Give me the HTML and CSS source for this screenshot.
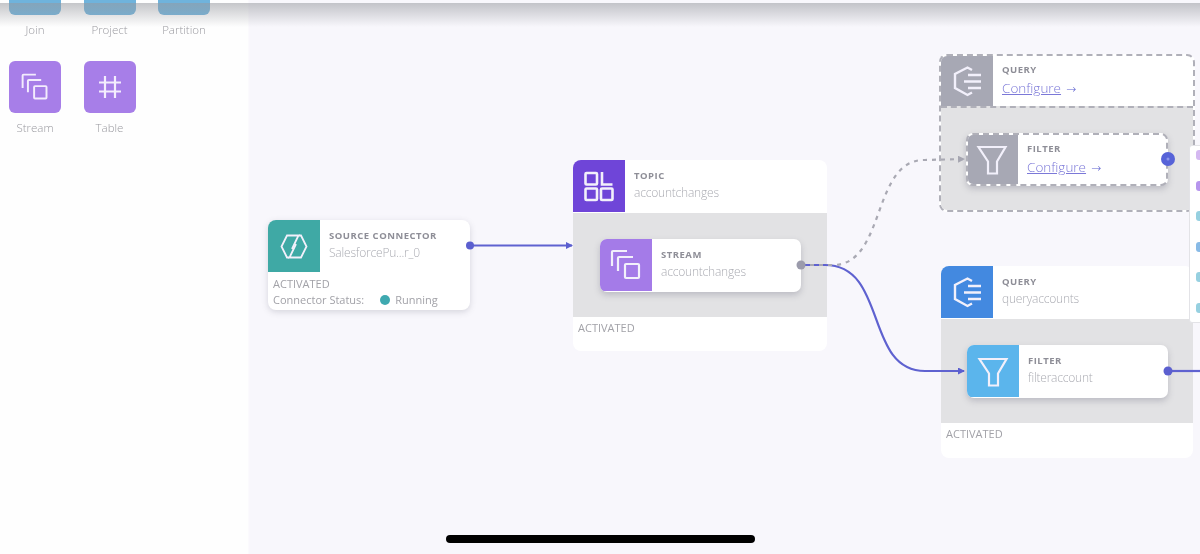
FILE: index.html
```html
<!DOCTYPE html>
<html lang="en">
<head>
  <meta charset="UTF-8">
  <title>Pipeline</title>
  <link rel="stylesheet" href="styles.css">
</head>
<body>
  <svg class="defs" width="0" height="0">
    <defs>
      <symbol id="i-stream" viewBox="0 0 52 52">
        <path d="M12 27V13a1 1 0 0 1 1-1h14M18 32V19a1 1 0 0 1 1-1h14" fill="none" stroke="currentColor" stroke-width="2.200"/>
        <rect x="25" y="25" width="14" height="14" rx="1" fill="none" stroke="currentColor" stroke-width="2.200"/>
      </symbol>
      <symbol id="i-table" viewBox="0 0 52 52">
        <path d="M21 15v22M31 15v22M15 21.500h22M15 30.500h22" fill="none" stroke="currentColor" stroke-width="2.200"/>
      </symbol>
      <symbol id="i-topic" viewBox="0 0 52 52">
        <rect x="12.500" y="13" width="11.500" height="11.500" rx="1" fill="none" stroke="currentColor" stroke-width="2.600"/>
        <path d="M29 12v12.500h10.500" fill="none" stroke="currentColor" stroke-width="2.600"/>
        <rect x="12.500" y="28.500" width="11.500" height="11.500" rx="1" fill="none" stroke="currentColor" stroke-width="2.600"/>
        <rect x="28" y="28.500" width="11.500" height="11.500" rx="1" fill="none" stroke="currentColor" stroke-width="2.600"/>
      </symbol>
      <symbol id="i-query" viewBox="0 0 52 52">
        <path d="M31 15 26.500 12.500 14 19v14l12.500 7 4.500-2.500" fill="none" stroke="currentColor" stroke-width="2.400"/>
        <path d="M27 20h13M23 26.500h17M27 33h13" fill="none" stroke="currentColor" stroke-width="2.400"/>
      </symbol>
      <symbol id="i-filter" viewBox="0 0 52 52">
        <path d="M12.500 14h27L31 28.500V40.500h-9V28.500z" fill="none" stroke="currentColor" stroke-width="2.200"/>
      </symbol>
      <symbol id="i-connector" viewBox="0 0 52 52">
        <path d="M21 37.500H19L13.500 26.500 19 15.500H30.500L24 29" fill="none" stroke="currentColor" stroke-width="1.800"/>
        <path d="M31 15.500H33L38.500 26.500 33 37.500H21.500L28 24" fill="none" stroke="currentColor" stroke-width="1.800"/>
      </symbol>
      <marker id="arrow-blue" markerWidth="8" markerHeight="8" refX="6" refY="3.500" orient="auto" markerUnits="userSpaceOnUse">
        <path d="M0 0 7 3.500 0 7z" fill="#5b5fcf"/>
      </marker>
      <marker id="arrow-grey" markerWidth="8" markerHeight="8" refX="6" refY="3.500" orient="auto" markerUnits="userSpaceOnUse">
        <path d="M0 0 7 3.500 0 7z" fill="#a5a5b0"/>
      </marker>
    </defs>
  </svg>

  <div class="app">
    <aside class="palette">
      <div class="tools">
        <div class="tool"><div class="tile tile-blue"></div><span>Join</span></div>
        <div class="tool"><div class="tile tile-blue"></div><span>Project</span></div>
        <div class="tool"><div class="tile tile-blue"></div><span>Partition</span></div>
        <div class="tool"><div class="tile"><svg class="icon icon-small"><use href="#i-stream"/></svg></div><span>Stream</span></div>
        <div class="tool"><div class="tile"><svg class="icon"><use href="#i-table"/></svg></div><span>Table</span></div>
      </div>
    </aside>

    <main class="canvas">
      <!-- source connector -->
      <section class="node node-source">
        <div class="node-head">
          <div class="node-icon bg-teal"><svg class="icon"><use href="#i-connector"/></svg></div>
          <div class="node-text">
            <div class="node-type">SOURCE CONNECTOR</div>
            <div class="node-name">SalesforcePu...r_0</div>
          </div>
        </div>
        <div class="node-status">
          <div>ACTIVATED</div>
          <div class="status-row"><span>Connector Status:</span><i class="dot"></i><span>Running</span></div>
        </div>
      </section>

      <!-- topic -->
      <section class="node node-topic">
        <div class="node-head">
          <div class="node-icon bg-violet"><svg class="icon"><use href="#i-topic"/></svg></div>
          <div class="node-text">
            <div class="node-type">TOPIC</div>
            <div class="node-name">accountchanges</div>
          </div>
        </div>
        <div class="node-body">
          <div class="card">
            <div class="node-icon bg-purple"><svg class="icon"><use href="#i-stream"/></svg></div>
            <div class="node-text">
              <div class="node-type">STREAM</div>
              <div class="node-name">accountchanges</div>
            </div>
          </div>
        </div>
        <div class="node-foot">ACTIVATED</div>
      </section>

      <!-- query not configured yet -->
      <section class="node node-draft">
        <div class="node-head">
          <div class="node-icon bg-grey"><svg class="icon"><use href="#i-query"/></svg></div>
          <div class="node-text">
            <div class="node-type">QUERY</div>
            <div class="node-name"><a class="configure">Configure</a> <span class="go">→</span></div>
          </div>
        </div>
        <div class="node-body">
          <div class="card card-draft">
            <div class="node-icon bg-grey"><svg class="icon"><use href="#i-filter"/></svg></div>
            <div class="node-text">
              <div class="node-type">FILTER</div>
              <div class="node-name"><a class="configure">Configure</a> <span class="go">→</span></div>
            </div>
          </div>
        </div>
      </section>

      <!-- query -->
      <section class="node node-query">
        <div class="node-head">
          <div class="node-icon bg-blue"><svg class="icon"><use href="#i-query"/></svg></div>
          <div class="node-text">
            <div class="node-type">QUERY</div>
            <div class="node-name">queryaccounts</div>
          </div>
        </div>
        <div class="node-body">
          <div class="card">
            <div class="node-icon bg-sky"><svg class="icon"><use href="#i-filter"/></svg></div>
            <div class="node-text">
              <div class="node-type">FILTER</div>
              <div class="node-name">filteraccount</div>
            </div>
          </div>
        </div>
        <div class="node-foot">ACTIVATED</div>
      </section>

      <svg class="wires" viewBox="248 0 952 554">
        <path d="M470 245.500H572" class="wire" marker-end="url(#arrow-blue)"/>
        <path d="M801 265H825C888 265 864 371 925 371H964" class="wire" marker-end="url(#arrow-blue)"/>
        <path d="M801 265H835C886 262 872 159 925 160L964 159" class="wire-dash" marker-end="url(#arrow-grey)"/>
        <path d="M1168 371H1200" class="wire"/>
        <circle cx="470" cy="245.500" r="4" fill="#5b5fcf"/>
        <circle cx="801" cy="265" r="4.500" fill="#9b9bab"/>
        <circle cx="1168" cy="159" r="7" fill="#5763d8"/>
        <circle cx="1168" cy="159" r="1.500" fill="#8d96ea"/>
        <circle cx="1168" cy="371" r="4.500" fill="#5b5fcf"/>
      </svg>

      <!-- menu cut off by the window edge, only the icon edges show -->
      <div class="popup">
        <i class="c-purple"></i>
        <i class="c-violet"></i>
        <i class="c-teal"></i>
        <i class="c-blue"></i>
        <i class="c-teal"></i>
        <i class="c-teal"></i>
      </div>
    </main>
  </div>

  <div class="top-shade"></div>
  <div class="home-bar"></div>
</body>
</html>
```

FILE: styles.css
```css
html, body {
  margin: 0;
  padding: 0;
  height: 100%;
  overflow: hidden;
}
body {
  font-family: "Open Sans", "Liberation Sans", sans-serif;
  background: #f8f7fc;
  color: #a3a3aa;
}
.defs {
  position: absolute;
}

.app {
  display: flex;
  height: 554px;
  filter: blur(0.45px);
}

/* left palette */
.palette {
  width: 248px;
  flex: none;
  background: #fefefe;
  box-shadow: 1px 0 1px #fbfafd;
  box-sizing: border-box;
  padding-left: 9px;
  overflow: hidden;
}
.tools {
  display: grid;
  grid-template-columns: repeat(3, 52px);
  column-gap: 22.5px;
  row-gap: 24px;
  margin-top: -37px;
}
.tool {
  display: flex;
  flex-direction: column;
  align-items: center;
  gap: 7px;
  font-size: 11.500px;
  font-weight: 300;
  line-height: 15px;
  color: #9a9aa0;
  white-space: nowrap;
}
.tile {
  width: 52px;
  height: 52px;
  border-radius: 6px;
  background: #a77ee8;
  color: #f3ecfd;
}
.tile-blue {
  background: #6fb3dc;
}
.icon {
  display: block;
  width: 52px;
  height: 52px;
}
.icon-small {
  width: 46px;
  height: 46px;
  padding: 3px;
}

/* diagram */
.canvas {
  position: relative;
  flex: 1;
  overflow: hidden;
}
.wires {
  position: absolute;
  left: 0;
  top: 0;
  width: 952px;
  height: 554px;
}
.wire {
  fill: none;
  stroke: #5f62d0;
  stroke-width: 2.200;
}
.wire-dash {
  fill: none;
  stroke: #a9a9b3;
  stroke-width: 2.200;
  stroke-dasharray: 4 5;
}

.node {
  position: absolute;
  background: #fff;
  border-radius: 8px;
  font-size: 12px;
  overflow: hidden;
}
.node-head {
  display: flex;
  height: 52px;
}
.node-icon {
  width: 52px;
  height: 52px;
  flex: none;
  color: #f2f0fb;
}
.node-text {
  padding: 9px 0 0 9px;
  white-space: nowrap;
}
.node-type {
  font-size: 9.500px;
  line-height: 14px;
  font-weight: 700;
  letter-spacing: 0.5px;
  color: #8e8e97;
}
.node-name {
  margin-top: 1px;
  font-size: 12px;
  line-height: 17px;
  font-weight: 300;
  letter-spacing: -0.2px;
  color: #abacb3;
}
.node-body {
  background: #e2e2e4;
  height: 104px;
  margin-top: 1px;
  padding: 26px 26px 0 27px;
  box-sizing: border-box;
}
.node-foot {
  padding: 4px 5px;
  font-size: 11px;
  line-height: 14px;
  color: #a2a2a8;
}

.card {
  display: flex;
  height: 53px;
  background: #fff;
  border-radius: 7px;
  overflow: hidden;
  box-shadow: 0 3px 6px rgba(90, 90, 110, 0.28);
}

.node-source {
  left: 20px;
  top: 220px;
  width: 202px;
  height: 90px;
  box-shadow: 0 2px 6px rgba(90, 90, 110, 0.22);
}
.node-status {
  padding: 4px 5px;
  font-size: 11px;
  line-height: 16px;
  color: #a2a2a8;
}
.status-row {
  display: flex;
  align-items: center;
}
.dot {
  width: 10px;
  height: 10px;
  margin: 0 5px 0 16px;
  border-radius: 50%;
  background: #3fa9b0;
}

.node-topic {
  left: 325px;
  top: 160px;
  width: 254px;
  height: 191px;
}
.node-query {
  left: 693px;
  top: 266px;
  width: 252px;
  height: 192px;
}
.node-query .node-body {
  padding-left: 26px;
  padding-right: 25px;
}
.node-draft {
  left: 691px;
  top: 54px;
  width: 256px;
  height: 158px;
  box-sizing: border-box;
  border: 2px dashed #b0b0b9;
}
.node-draft .node-head {
  height: 50px;
}
.node-draft .node-head .node-icon {
  height: 50px;
}
.node-draft .node-head .icon {
  margin-top: -1px;
}
.node-draft .node-head .node-text {
  padding-top: 7px;
}
.node-draft .node-name,
.card-draft .node-name {
  margin-top: 3px;
}
.node-draft .node-body {
  height: 104px;
  margin-top: 0;
  border-top: 2px dashed #b0b0b9;
  padding: 25px 25px 0;
}
.card-draft {
  border: 2px dashed #b0b0b9;
  box-sizing: border-box;
}
.card-draft .node-icon {
  margin: -2px 0 0 -2px;
}
.card-draft .node-text {
  padding-top: 7px;
}

.bg-teal { background: #3fa9a5; }
.bg-violet { background: #6f45d8; }
.bg-purple { background: #a47be8; }
.bg-grey { background: #a7a8b4; }
.bg-blue { background: #4389e0; }
.bg-sky { background: #5bb5ec; }

.configure {
  color: #7b78d8;
  text-decoration: underline;
  font-size: 13.500px;
  letter-spacing: 0;
}
.go {
  color: #5b5fcf;
  font-family: "DejaVu Sans", sans-serif;
  font-size: 12px;
  margin-left: 2px;
}

.popup {
  position: absolute;
  left: 941px;
  top: 145px;
  width: 20px;
  height: 178px;
  box-sizing: border-box;
  padding: 4px 0 0 6px;
  background: #fff;
  border: 1px solid #e3e3e7;
  border-radius: 3px;
  display: flex;
  flex-direction: column;
  gap: 20.500px;
}
.popup i {
  width: 10px;
  height: 10px;
  flex: none;
  border-radius: 3px;
  opacity: 0.8;
}
.c-purple { background: #c9a6ee; }
.c-violet { background: #a47be8; }
.c-teal { background: #7cc4d8; }
.c-blue { background: #6aa9e0; }

/* things over the whole window */
.top-shade {
  position: absolute;
  left: 0;
  top: 3px;
  width: 100%;
  height: 24px;
  background: linear-gradient(to bottom, rgba(150, 152, 158, 0.55), rgba(150, 152, 158, 0));
}
.home-bar {
  position: absolute;
  left: 446px;
  top: 535px;
  width: 309px;
  height: 8px;
  border-radius: 4px;
  background: #000;
}
```
